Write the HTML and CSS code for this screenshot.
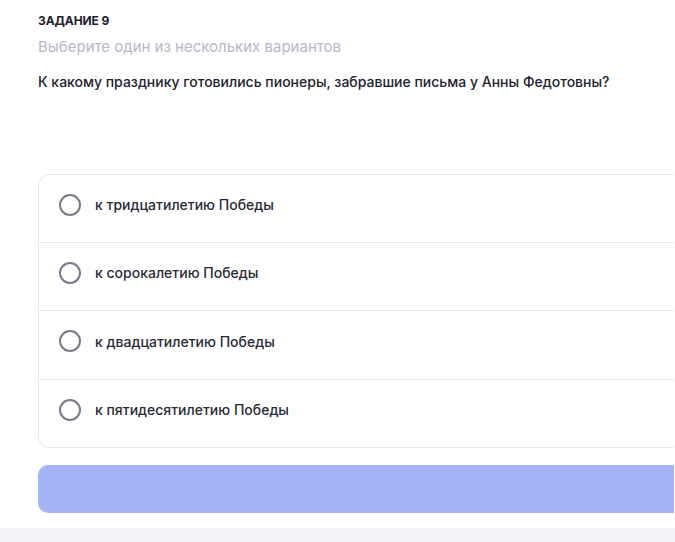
FILE: index.html
```html
<!DOCTYPE html>
<html lang="ru">
<head>
    <meta charset="UTF-8">
    <meta name="viewport" content="width=device-width, initial-scale=1.0">
    <title>Задание 9</title>
    <link rel="stylesheet" href="styles.css">
</head>
<body>
    <div class="task">
        <div class="task-label">Задание 9</div>
        <div class="task-hint">Выберите один из нескольких вариантов</div>
        <div class="task-question">К какому празднику готовились пионеры, забравшие письма у Анны Федотовны?</div>

        <div class="options">
            <label class="option">
                <span class="radio"></span>
                <span class="option-text">к тридцатилетию Победы</span>
            </label>
            <label class="option">
                <span class="radio"></span>
                <span class="option-text">к сорокалетию Победы</span>
            </label>
            <label class="option">
                <span class="radio"></span>
                <span class="option-text">к двадцатилетию Победы</span>
            </label>
            <label class="option">
                <span class="radio"></span>
                <span class="option-text">к пятидесятилетию Победы</span>
            </label>
        </div>

        <button class="submit" type="button"></button>
    </div>
    <div class="footer-strip"></div>
</body>
</html>
```

FILE: styles.css
```css
html, body {
    margin: 0;
    padding: 0;
    overflow: hidden;
    background: #fff;
}
body {
    font-family: Inter, "Noto Sans", sans-serif;
    color: #22212e;
    width: 675px;
    height: 542px;
    display: flex;
    flex-direction: column;
}
.task {
    padding: 14px 0 0 38px;
    width: 636px;
}
.task-label {
    font-size: 12px;
    font-weight: 700;
    text-transform: uppercase;
    line-height: 14px;
    letter-spacing: -0.1px;
}
.task-hint {
    margin-top: 9px;
    font-size: 15px;
    line-height: 20px;
    color: #b8b6c8;
}
.task-question {
    margin-top: 16px;
    font-size: 14px;
    line-height: 18px;
    font-weight: 500;
}
.options {
    margin-top: 83px;
    border: 1px solid #e8e8ee;
    border-right: none;
    border-radius: 12px 0 0 12px;
    overflow: hidden;
}
.option {
    display: flex;
    align-items: center;
    gap: 14px;
    height: 68.5px;
    box-sizing: border-box;
    padding: 0 0 7px 20px;
    border-top: 1px solid #e8e8ee;
    cursor: pointer;
}
.option:first-child {
    border-top: none;
    height: 66.5px;
}
.radio {
    width: 18px;
    height: 18px;
    border: 2px solid #7b7889;
    border-radius: 50%;
    flex: none;
}
.option-text {
    font-size: 14px;
    font-weight: 500;
    color: #2a2937;
}
.submit {
    display: block;
    margin-top: 17px;
    width: 100%;
    height: 48px;
    border: none;
    border-radius: 10px 0 0 10px;
    background: #a5b4f7;
}
.footer-strip {
    margin-top: 15px;
    flex: 1;
    background: #f3f3f7;
}
```
